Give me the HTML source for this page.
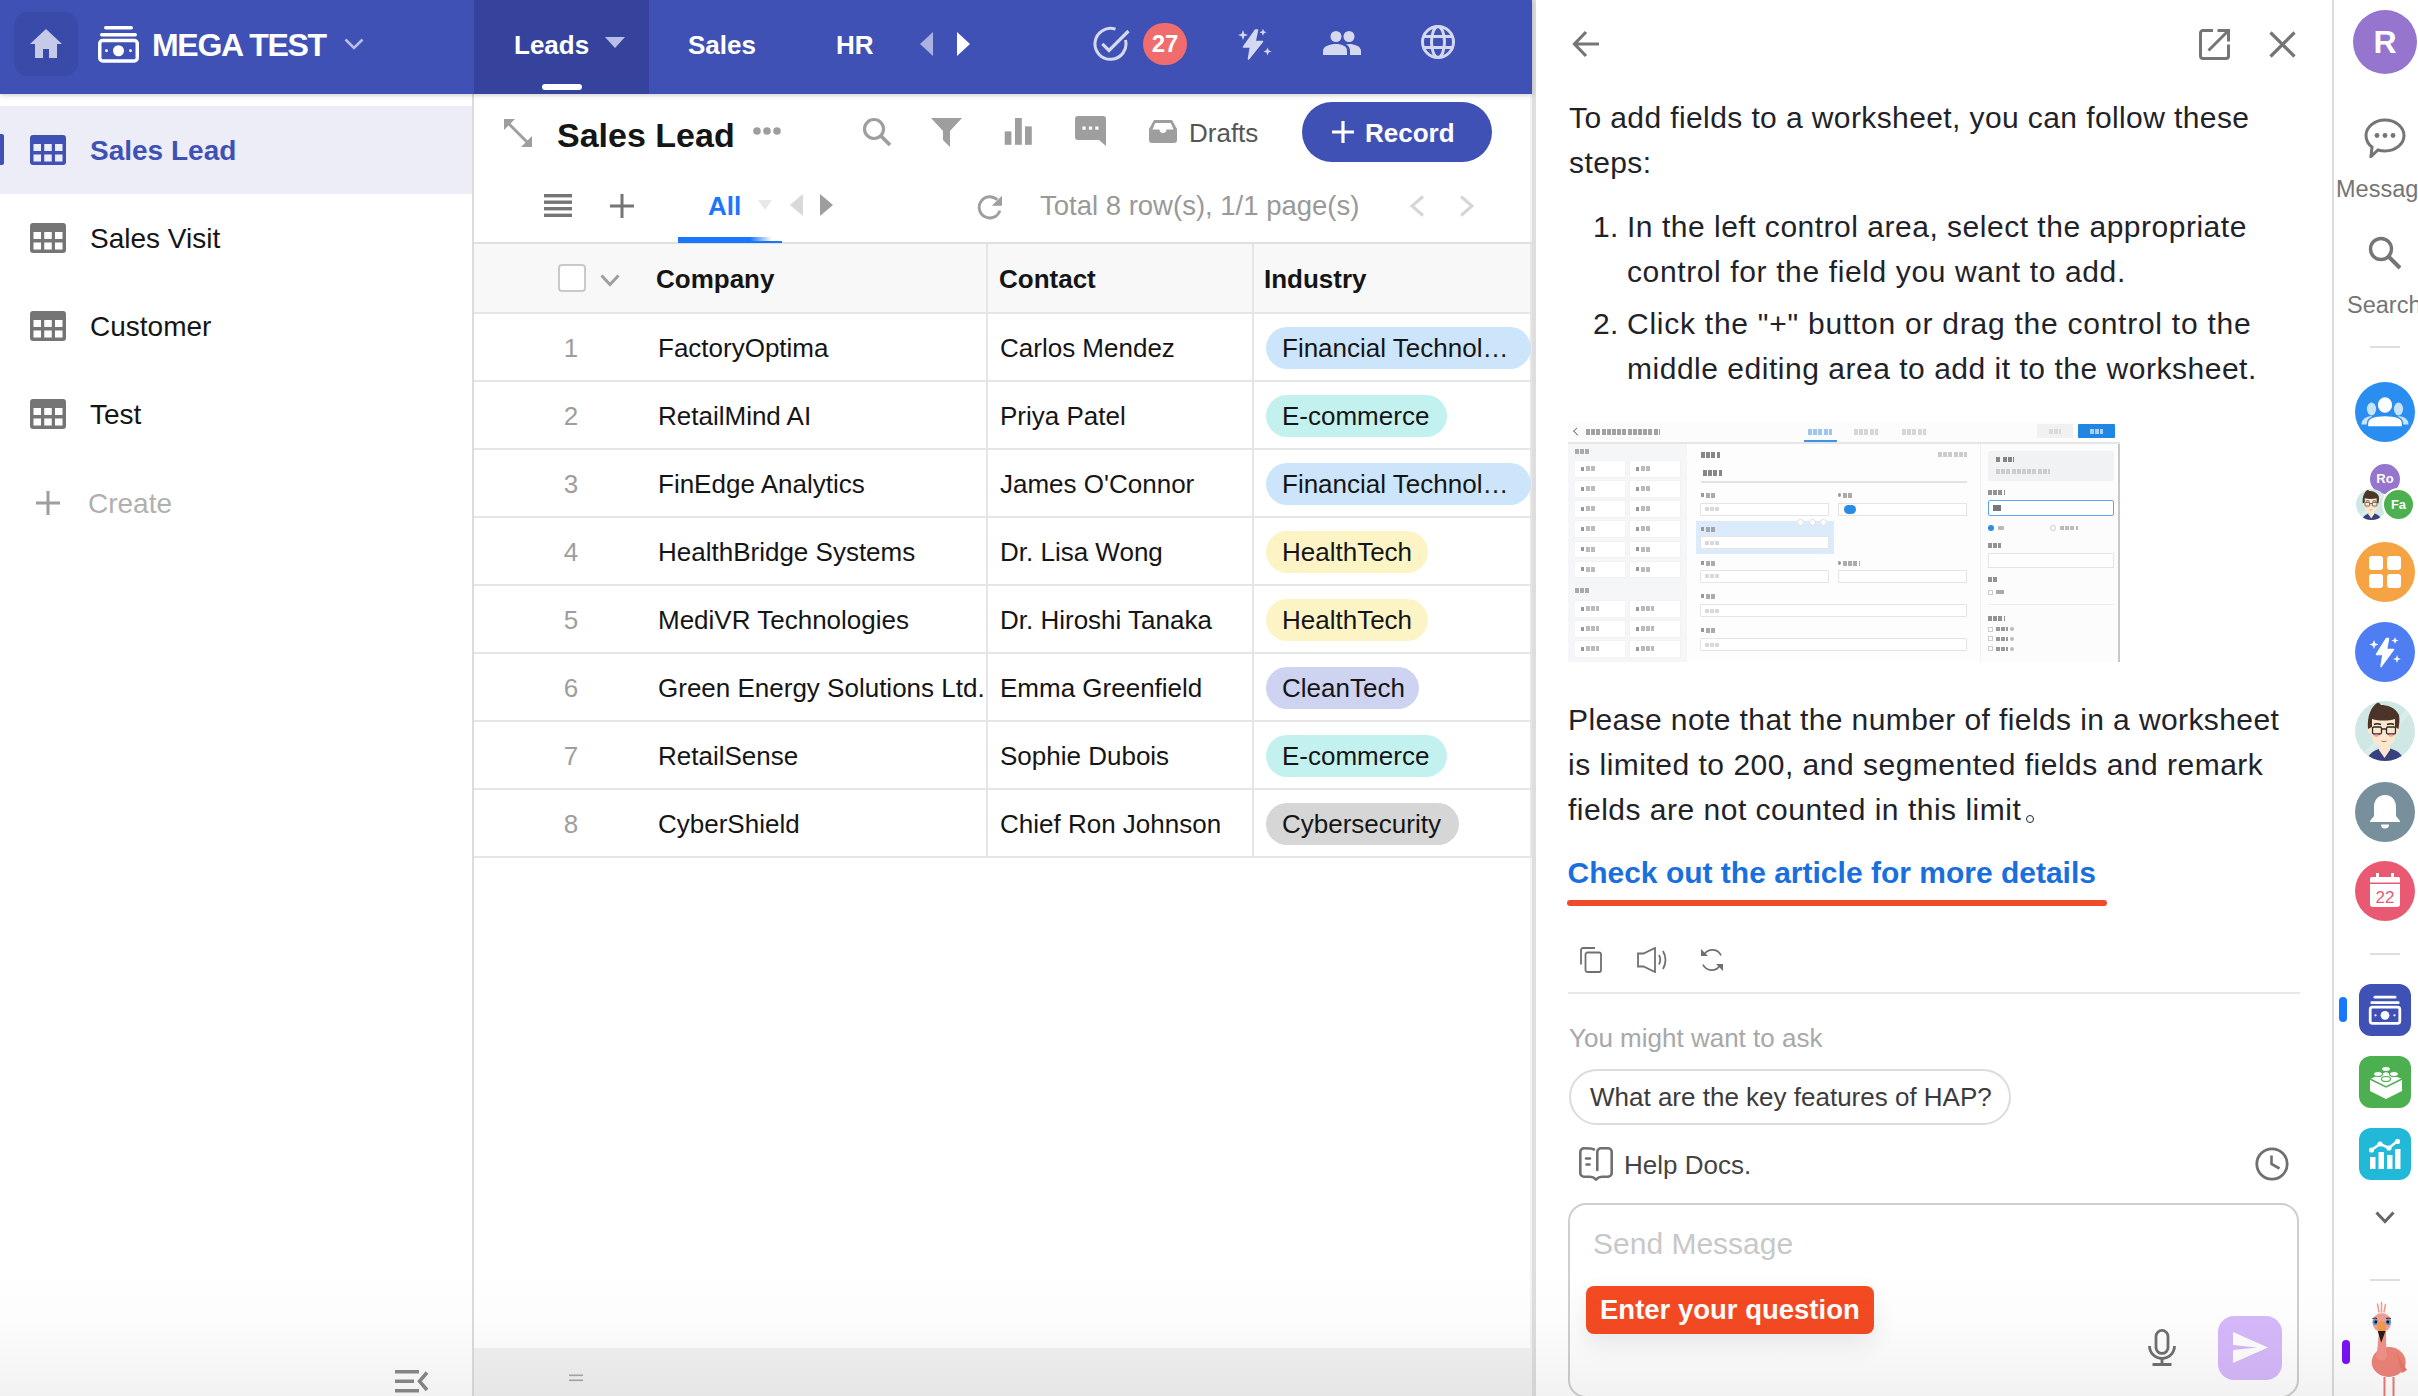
<!DOCTYPE html>
<html><head><meta charset="utf-8">
<style>
*{box-sizing:border-box;margin:0;padding:0}
html,body{width:2418px;height:1396px;overflow:hidden;background:#fff;font-family:"Liberation Sans",sans-serif;color:#151515}
.abs{position:absolute}
svg{display:block}
#nav{position:absolute;left:0;top:0;width:1532px;height:94px;background:#3f51b5;box-shadow:0 1px 5px rgba(0,0,0,0.22);z-index:5}
#home{position:absolute;left:14px;top:12px;width:64px;height:64px;border-radius:14px;background:#3a4aa8}
.navtxt{position:absolute;color:#fff;font-weight:700;white-space:nowrap}
#side{position:absolute;left:0;top:94px;width:474px;height:1302px;border-right:2px solid #dcdcdc;background:#fff}
.sitem{position:absolute;left:0;width:472px;height:88px}
.sitem .lbl{position:absolute;left:90px;top:1px;line-height:88px;font-size:28px;color:#151515;white-space:nowrap}
#main{position:absolute;left:474px;top:94px;width:1058px;height:1302px;background:#fff}
#chatb{position:absolute;left:1532px;top:0;width:4px;height:1396px;background:#dedede}
#chat{position:absolute;left:1536px;top:0;width:796px;height:1396px;background:#fff}
#rsb{position:absolute;left:2332px;top:0;width:86px;height:1396px;border-left:2px solid #dcdcdc;background:#fff;overflow:hidden}
.hd{top:170px;font-size:26px;line-height:30px;font-weight:700;color:#151515;white-space:nowrap}
.row{position:absolute;left:0;width:1058px;height:68px;border-top:2px solid #e6e6e6}
.row .num{position:absolute;left:67px;width:60px;text-align:center;top:1px;line-height:66px;font-size:26px;color:#9e9e9e}
.row .c1{position:absolute;left:184px;top:1px;line-height:66px;font-size:26px;color:#151515;white-space:nowrap}
.row .c2{position:absolute;left:526px;top:1px;line-height:66px;font-size:26px;color:#151515;white-space:nowrap}
.row .pill{position:absolute;left:792px;top:13px;height:42px;border-radius:21px;padding-left:16px;line-height:43px;font-size:26px;color:#151515;white-space:nowrap;overflow:hidden}
.ct{font-size:30px;line-height:45px;letter-spacing:0.4px;color:#1f2329;white-space:nowrap}
#shade{position:absolute;left:0;top:1270px;width:2418px;height:126px;background:linear-gradient(to bottom,rgba(0,0,0,0) 0%,rgba(0,0,0,0.012) 40%,rgba(0,0,0,0.05) 100%);z-index:50;pointer-events:none}
</style></head><body>

<!-- NAV -->
<div id="nav">
  <div id="home"><svg class="abs" style="left:16px;top:17px" width="32" height="30" viewBox="0 0 32 30"><path d="M16 0 L32 15 L27 15 L27 29 L19 29 L19 20 L13 20 L13 29 L5 29 L5 15 L0 15 Z" fill="#c5cae9"/></svg></div>
  <svg class="abs" style="left:98px;top:25px" width="41" height="38" viewBox="0 0 41 38"><rect x="6" y="1" width="29" height="3.5" rx="1.75" fill="#fff"/><rect x="2" y="8" width="37" height="3.5" rx="1.75" fill="#fff"/><rect x="1.75" y="15.5" width="37.5" height="20.5" rx="3" fill="none" stroke="#fff" stroke-width="3.5"/><circle cx="20.5" cy="25.75" r="5.5" fill="#fff"/><circle cx="8.5" cy="25.75" r="1.4" fill="#fff"/><circle cx="32.5" cy="25.75" r="1.4" fill="#fff"/></svg>
  <div class="navtxt" style="left:152px;top:27px;font-size:32px;letter-spacing:-1.3px;line-height:36px">MEGA TEST</div>
  <svg class="abs" style="left:344px;top:38px" width="20" height="12" viewBox="0 0 20 12"><path d="M1.5 1.5 L10 10 L18.5 1.5" fill="none" stroke="#b8bfe6" stroke-width="2.6"/></svg>
  <div class="abs" style="left:474px;top:0;width:175px;height:94px;background:#36439c"></div>
  <div class="navtxt" style="left:514px;top:30px;font-size:26px;line-height:30px">Leads</div>
  <svg class="abs" style="left:605px;top:37px" width="20" height="11" viewBox="0 0 20 11"><path d="M0 0 L20 0 L10 11 Z" fill="#b8bfe6"/></svg>
  <div class="abs" style="left:542px;top:84px;width:40px;height:6px;border-radius:3px;background:#fff"></div>
  <div class="navtxt" style="left:688px;top:30px;font-size:26px;line-height:30px">Sales</div>
  <div class="navtxt" style="left:836px;top:30px;font-size:26px;line-height:30px">HR</div>
  <svg class="abs" style="left:920px;top:32px" width="14" height="24" viewBox="0 0 14 24"><path d="M13 0 L13 24 L0 12 Z" fill="#aab2e0"/></svg>
  <svg class="abs" style="left:956px;top:32px" width="14" height="24" viewBox="0 0 14 24"><path d="M1 0 L1 24 L14 12 Z" fill="#fff"/></svg>
  <!-- check circle -->
  <svg class="abs" style="left:1093px;top:26px" width="38" height="36" viewBox="0 0 38 36"><path d="M32.5 14 A15.5 15.5 0 1 1 22.5 3.2" fill="none" stroke="#d5d9f0" stroke-width="3"/><path d="M9.3 17.9 L16 24.5 L35.5 5" fill="none" stroke="#d5d9f0" stroke-width="3.2"/></svg>
  <div class="abs" style="left:1143px;top:23px;width:44px;height:42px;border-radius:22px;background:#f16c6c;color:#fff;font-weight:700;font-size:24px;line-height:42px;text-align:center">27</div>
  <!-- sparkle bolt -->
  <svg class="abs" style="left:1236px;top:28px" width="36" height="33" viewBox="0 0 36 33"><path d="M19.5 2 L7.5 19 L14.5 19 L12.5 31 L26.5 13.5 L19 13.5 L21.5 2 Z" fill="#d5d9f0" stroke="#d5d9f0" stroke-width="1.6" stroke-linejoin="round"/><path d="M7 2 L8.3 5.7 L12 7 L8.3 8.3 L7 12 L5.7 8.3 L2 7 L5.7 5.7 Z" fill="#d5d9f0"/><path d="M27 0.8 L28 3.3 L30.5 4.3 L28 5.3 L27 7.8 L26 5.3 L23.5 4.3 L26 3.3 Z" fill="#d5d9f0"/><path d="M31.5 19.4 L32.6 22.3 L35.5 23.4 L32.6 24.5 L31.5 27.4 L30.4 24.5 L27.5 23.4 L30.4 22.3 Z" fill="#d5d9f0"/></svg>
  <!-- people -->
  <svg class="abs" style="left:1323px;top:31px" width="38" height="25" viewBox="0 0 38 25"><circle cx="13" cy="5.5" r="5.5" fill="#d5d9f0"/><circle cx="26" cy="5.5" r="5.5" fill="#d5d9f0"/><path d="M0 24 L0 20 C0 15 7 13 13 13 C19 13 24 15 24 20 L24 24 Z" fill="#d5d9f0"/><path d="M26 13 C31 13 38 15 38 20 L38 24 L27 24 L27 20 C27 17 25.5 14.5 23 13.5 C24 13.2 25 13 26 13 Z" fill="#d5d9f0"/></svg>
  <!-- globe -->
  <svg class="abs" style="left:1420px;top:24px" width="36" height="36" viewBox="0 0 36 36"><circle cx="18" cy="18" r="15.5" fill="none" stroke="#d5d9f0" stroke-width="3"/><ellipse cx="18" cy="18" rx="6.5" ry="15.5" fill="none" stroke="#d5d9f0" stroke-width="3"/><path d="M4 12.5 H32 M4 23.5 H32" stroke="#d5d9f0" stroke-width="3"/></svg>
</div>

<!-- LEFT SIDEBAR -->
<div id="side">
  <div class="sitem" style="top:12px;background:#ededf8">
    <div class="abs" style="left:0;top:28px;width:4px;height:31px;border-radius:0 2px 2px 0;background:#3f51b5"></div>
    <svg class="abs" style="left:30px;top:29px" width="36" height="30" viewBox="0 0 36 30"><rect x="0" y="0" width="36" height="30" rx="3" fill="#3f51b5"/><g fill="#ededf8"><rect x="3.5" y="9" width="7.5" height="7"/><rect x="14.25" y="9" width="7.5" height="7"/><rect x="25" y="9" width="7.5" height="7"/><rect x="3.5" y="19.5" width="7.5" height="7"/><rect x="14.25" y="19.5" width="7.5" height="7"/><rect x="25" y="19.5" width="7.5" height="7"/></g></svg>
    <div class="lbl" style="color:#3f51b5;font-weight:700">Sales Lead</div>
  </div>
  <div class="sitem" style="top:100px">
    <svg class="abs" style="left:30px;top:29px" width="36" height="30" viewBox="0 0 36 30"><rect x="0" y="0" width="36" height="30" rx="3" fill="#757575"/><g fill="#fff"><rect x="3.5" y="9" width="7.5" height="7"/><rect x="14.25" y="9" width="7.5" height="7"/><rect x="25" y="9" width="7.5" height="7"/><rect x="3.5" y="19.5" width="7.5" height="7"/><rect x="14.25" y="19.5" width="7.5" height="7"/><rect x="25" y="19.5" width="7.5" height="7"/></g></svg>
    <div class="lbl">Sales Visit</div>
  </div>
  <div class="sitem" style="top:188px">
    <svg class="abs" style="left:30px;top:29px" width="36" height="30" viewBox="0 0 36 30"><rect x="0" y="0" width="36" height="30" rx="3" fill="#757575"/><g fill="#fff"><rect x="3.5" y="9" width="7.5" height="7"/><rect x="14.25" y="9" width="7.5" height="7"/><rect x="25" y="9" width="7.5" height="7"/><rect x="3.5" y="19.5" width="7.5" height="7"/><rect x="14.25" y="19.5" width="7.5" height="7"/><rect x="25" y="19.5" width="7.5" height="7"/></g></svg>
    <div class="lbl">Customer</div>
  </div>
  <div class="sitem" style="top:276px">
    <svg class="abs" style="left:30px;top:29px" width="36" height="30" viewBox="0 0 36 30"><rect x="0" y="0" width="36" height="30" rx="3" fill="#757575"/><g fill="#fff"><rect x="3.5" y="9" width="7.5" height="7"/><rect x="14.25" y="9" width="7.5" height="7"/><rect x="25" y="9" width="7.5" height="7"/><rect x="3.5" y="19.5" width="7.5" height="7"/><rect x="14.25" y="19.5" width="7.5" height="7"/><rect x="25" y="19.5" width="7.5" height="7"/></g></svg>
    <div class="lbl">Test</div>
  </div>
  <div class="sitem" style="top:365px">
    <svg class="abs" style="left:36px;top:32px" width="24" height="24" viewBox="0 0 24 24"><path d="M12 0 V24 M0 12 H24" stroke="#9e9e9e" stroke-width="3"/></svg>
    <div class="lbl" style="left:88px;color:#b0b0b0">Create</div>
  </div>
  <svg class="abs" style="left:395px;top:1276px" width="34" height="23" viewBox="0 0 34 23"><g fill="#8a8a8a"><rect x="0" y="0" width="24" height="3.5"/><rect x="0" y="9.5" width="19" height="3.5"/><rect x="0" y="19" width="24" height="3.5"/></g><path d="M32 2.5 L24.5 11.25 L32 20" fill="none" stroke="#8a8a8a" stroke-width="3.5"/></svg>
</div>

<!-- MAIN -->
<div id="main">
  <div class="abs" style="left:1056px;top:0;width:2px;height:1302px;background:#f2f2f2"></div>
  <!-- toolbar row 1 -->
  <svg class="abs" style="left:30px;top:25px" width="28" height="28" viewBox="0 0 28 28"><path d="M5 5 L23 23" stroke="#9e9e9e" stroke-width="3"/><path d="M0 0 L11 0 L0 11 Z" fill="#9e9e9e"/><path d="M28 28 L17 28 L28 17 Z" fill="#9e9e9e"/></svg>
  <div class="abs" style="left:83px;top:21px;font-size:34px;line-height:40px;font-weight:700;color:#151515;white-space:nowrap">Sales Lead</div>
  <svg class="abs" style="left:279px;top:33px" width="28" height="8" viewBox="0 0 28 8"><circle cx="4" cy="4" r="3.8" fill="#9e9e9e"/><circle cx="14" cy="4" r="3.8" fill="#9e9e9e"/><circle cx="24" cy="4" r="3.8" fill="#9e9e9e"/></svg>
  <svg class="abs" style="left:388px;top:23px" width="30" height="30" viewBox="0 0 30 30"><circle cx="12" cy="12" r="9.5" fill="none" stroke="#9e9e9e" stroke-width="3.2"/><path d="M19 19 L28 28" stroke="#9e9e9e" stroke-width="3.8"/></svg>
  <svg class="abs" style="left:457px;top:24px" width="31" height="29" viewBox="0 0 31 29"><path d="M0 0 H31 L19 13 V29 L12 22 V13 Z" fill="#9e9e9e"/></svg>
  <svg class="abs" style="left:530px;top:24px" width="28" height="28" viewBox="0 0 28 28"><rect x="0.7" y="13.4" width="6.7" height="13.4" fill="#9e9e9e"/><rect x="11" y="0" width="6.8" height="26.8" fill="#9e9e9e"/><rect x="21" y="8.4" width="6.8" height="18.4" fill="#9e9e9e"/></svg>
  <svg class="abs" style="left:601px;top:22px" width="31" height="30" viewBox="0 0 31 30"><path d="M3 0 H28 A3 3 0 0 1 31 3 V30 L24 24 H3 A3 3 0 0 1 0 21 V3 A3 3 0 0 1 3 0 Z" fill="#9e9e9e"/><rect x="7.5" y="10.5" width="3.2" height="3.2" fill="#fff"/><rect x="13.9" y="10.5" width="3.2" height="3.2" fill="#fff"/><rect x="20.3" y="10.5" width="3.2" height="3.2" fill="#fff"/></svg>
  <svg class="abs" style="left:675px;top:26px" width="28" height="23" viewBox="0 0 28 23"><path d="M5 0 H23 L28 9 V20 A3 3 0 0 1 25 23 H3 A3 3 0 0 1 0 20 V9 Z" fill="#9e9e9e"/><path d="M3.5 9.5 L6.2 3 H21.8 L24.5 9.5 H17.5 A3.5 3.5 0 0 1 10.5 9.5 Z" fill="#fff"/></svg>
  <div class="abs" style="left:715px;top:24px;font-size:26px;line-height:30px;color:#555;white-space:nowrap">Drafts</div>
  <div class="abs" style="left:828px;top:8px;width:190px;height:60px;border-radius:30px;background:#3f51b5"></div>
  <svg class="abs" style="left:858px;top:27px" width="22" height="22" viewBox="0 0 22 22"><path d="M11 0 V22 M0 11 H22" stroke="#fff" stroke-width="3.2"/></svg>
  <div class="abs" style="left:891px;top:24px;font-size:26px;line-height:30px;font-weight:700;color:#fff;white-space:nowrap">Record</div>
  <!-- toolbar row 2 -->
  <svg class="abs" style="left:70px;top:100px" width="28" height="23" viewBox="0 0 28 23"><g fill="#757575"><rect x="0" y="0" width="28" height="3.4"/><rect x="0" y="6.5" width="28" height="3.4"/><rect x="0" y="13" width="28" height="3.4"/><rect x="0" y="19.6" width="28" height="3.4"/></g></svg>
  <svg class="abs" style="left:136px;top:100px" width="24" height="24" viewBox="0 0 24 24"><path d="M12 0 V24 M0 12 H24" stroke="#757575" stroke-width="3"/></svg>
  <div class="abs" style="left:234px;top:97px;font-size:26px;line-height:30px;font-weight:700;color:#1a75ff;white-space:nowrap">All</div>
  <svg class="abs" style="left:284px;top:106px" width="14" height="10" viewBox="0 0 14 10"><path d="M0 0 H14 L7 10 Z" fill="#e8e8e8"/></svg>
  <svg class="abs" style="left:316px;top:100px" width="14" height="22" viewBox="0 0 14 22"><path d="M13 0 V22 L0 11 Z" fill="#d9d9d9"/></svg>
  <svg class="abs" style="left:345px;top:100px" width="14" height="22" viewBox="0 0 14 22"><path d="M1 0 V22 L14 11 Z" fill="#9e9e9e"/></svg>
  <div class="abs" style="left:0;top:148px;width:1058px;height:2px;background:#e0e0e0"></div>
  <div class="abs" style="left:204px;top:143px;width:104px;height:6px;background:linear-gradient(to right,#1a75ff 0,#1a75ff 72px,rgba(26,117,255,0) 94px)"></div>
  <div class="abs" style="left:204px;top:147px;width:104px;height:2px;background:#1a75ff"></div>
  <svg class="abs" style="left:502px;top:98px" width="28" height="28" viewBox="0 0 28 28"><path d="M23.9 18.6 A10.6 10.6 0 1 1 21.3 7.8" fill="none" stroke="#9e9e9e" stroke-width="2.9"/><path d="M26 3.7 L26 13.8 L15.8 13.8 Z" fill="#9e9e9e"/></svg>
  <div class="abs" style="left:566px;top:97px;font-size:27.5px;line-height:30px;color:#999;white-space:nowrap">Total 8 row(s), 1/1 page(s)</div>
  <svg class="abs" style="left:935px;top:101px" width="16" height="22" viewBox="0 0 16 22"><path d="M14 1.5 L3 11 L14 20.5" fill="none" stroke="#d6d6d6" stroke-width="3"/></svg>
  <svg class="abs" style="left:985px;top:101px" width="16" height="22" viewBox="0 0 16 22"><path d="M2 1.5 L13 11 L2 20.5" fill="none" stroke="#d6d6d6" stroke-width="3"/></svg>
  <!-- table header -->
  <div class="abs" style="left:0;top:150px;width:1058px;height:69px;background:#f8f8f8"></div>
  <div class="abs" style="left:84px;top:170px;width:28px;height:28px;border:2px solid #c9c9c9;border-radius:4px;background:#fff"></div>
  <svg class="abs" style="left:126px;top:180px" width="20" height="13" viewBox="0 0 20 13"><path d="M1.5 1.5 L10 10.5 L18.5 1.5" fill="none" stroke="#9e9e9e" stroke-width="3"/></svg>
  <div class="abs hd" style="left:182px">Company</div>
  <div class="abs hd" style="left:525px">Contact</div>
  <div class="abs hd" style="left:790px">Industry</div>
  <div class="abs" style="left:512px;top:150px;width:2px;height:613px;background:#e6e6e6"></div>
  <div class="abs" style="left:778px;top:150px;width:2px;height:613px;background:#e6e6e6"></div>
  <div class="abs" style="left:1056px;top:150px;width:2px;height:613px;background:#e6e6e6"></div>
  <div class="row" style="top:218px"><div class="num">1</div><div class="c1">FactoryOptima</div><div class="c2">Carlos Mendez</div><div class="pill" style="background:#cce5fa;width:265px">Financial Technol…</div></div>
  <div class="row" style="top:286px"><div class="num">2</div><div class="c1">RetailMind AI</div><div class="c2">Priya Patel</div><div class="pill" style="background:#c3f1ef;width:181px">E-commerce</div></div>
  <div class="row" style="top:354px"><div class="num">3</div><div class="c1">FinEdge Analytics</div><div class="c2">James O'Connor</div><div class="pill" style="background:#cce5fa;width:265px">Financial Technol…</div></div>
  <div class="row" style="top:422px"><div class="num">4</div><div class="c1">HealthBridge Systems</div><div class="c2">Dr. Lisa Wong</div><div class="pill" style="background:#fdf4c6;width:162px">HealthTech</div></div>
  <div class="row" style="top:490px"><div class="num">5</div><div class="c1">MediVR Technologies</div><div class="c2">Dr. Hiroshi Tanaka</div><div class="pill" style="background:#fdf4c6;width:162px">HealthTech</div></div>
  <div class="row" style="top:558px"><div class="num">6</div><div class="c1">Green Energy Solutions Ltd.</div><div class="c2">Emma Greenfield</div><div class="pill" style="background:#cfd3f2;width:153px">CleanTech</div></div>
  <div class="row" style="top:626px"><div class="num">7</div><div class="c1">RetailSense</div><div class="c2">Sophie Dubois</div><div class="pill" style="background:#c3f1ef;width:181px">E-commerce</div></div>
  <div class="row" style="top:694px"><div class="num">8</div><div class="c1">CyberShield</div><div class="c2">Chief Ron Johnson</div><div class="pill" style="background:#d6d6d6;width:193px">Cybersecurity</div></div>
  <div class="abs" style="left:0;top:762px;width:1058px;height:2px;background:#e6e6e6"></div>
  <!-- footer -->
  <div class="abs" style="left:0;top:1254px;width:1058px;height:48px;background:#f2f2f2"></div>
  <svg class="abs" style="left:95px;top:1280px" width="14" height="8" viewBox="0 0 14 8"><rect x="0" y="0.5" width="14" height="1.6" fill="#a8a8a8"/><rect x="0" y="5.5" width="14" height="1.6" fill="#a8a8a8"/></svg>
</div>

<div id="chatb"></div>
<!-- CHAT -->
<div id="chat">
  <svg class="abs" style="left:36px;top:30px" width="28" height="28" viewBox="0 0 28 28"><path d="M27 14 H3 M14 2 L2.5 14 L14 26" fill="none" stroke="#757575" stroke-width="3.2"/></svg>
  <svg class="abs" style="left:663px;top:29px" width="31" height="31" viewBox="0 0 31 31"><path d="M14 1.5 H4 A2.5 2.5 0 0 0 1.5 4 V27 A2.5 2.5 0 0 0 4 29.5 H27 A2.5 2.5 0 0 0 29.5 27 V15.5" fill="none" stroke="#757575" stroke-width="3"/><path d="M18.5 1.5 H29.5 V12.5 M29.5 1.5 L9.5 21.5" fill="none" stroke="#757575" stroke-width="3"/></svg>
  <svg class="abs" style="left:733px;top:31px" width="27" height="27" viewBox="0 0 27 27"><path d="M1.5 1.5 L25.5 25.5 M25.5 1.5 L1.5 25.5" stroke="#757575" stroke-width="3.2"/></svg>
  <div class="abs ct" style="left:33px;top:95px">To add fields to a worksheet, you can follow these<br>steps:</div>
  <div class="abs ct" style="left:57px;top:203.5px">1.</div>
  <div class="abs ct" style="left:91px;top:203.5px"><span style="letter-spacing:0.51px">In the left control area, select the appropriate</span><br><span style="letter-spacing:0.62px">control for the field you want to add.</span></div>
  <div class="abs ct" style="left:57px;top:301px">2.</div>
  <div class="abs ct" style="left:91px;top:301px"><span style="letter-spacing:0.75px">Click the "+" button or drag the control to the</span><br><span style="letter-spacing:0.52px">middle editing area to add it to the worksheet.</span></div>
<div class="abs" style="left:32px;top:422px;width:552px;height:240px;overflow:hidden;background:#fff"><div class="abs" style="left:0.0px;top:0.0px;width:552.0px;height:20.0px;background:#fcfcfc"></div><div class="abs" style="left:0.0px;top:20.0px;width:552.0px;height:1.5px;background:#e6e6e6"></div><div class="abs" style="left:6.0px;top:7.0px;width:6.0px;height:5.0px;border-left:1.2px solid #777;border-bottom:1.2px solid #777;transform:rotate(45deg)"></div><div class="abs" style="left:18.0px;top:6.5px;width:74px;height:6px;background:repeating-linear-gradient(90deg,#666 0,#666 4px,rgba(255,255,255,0) 4px,rgba(255,255,255,0) 5.2px);opacity:.6"></div><div class="abs" style="left:240.0px;top:6.5px;width:24px;height:6px;background:repeating-linear-gradient(90deg,#9cc7f2 0,#9cc7f2 4px,rgba(255,255,255,0) 4px,rgba(255,255,255,0) 5.2px)"></div><div class="abs" style="left:286.0px;top:6.5px;width:24px;height:6px;background:repeating-linear-gradient(90deg,#d6d6d6 0,#d6d6d6 4px,rgba(255,255,255,0) 4px,rgba(255,255,255,0) 5.2px)"></div><div class="abs" style="left:334.0px;top:6.5px;width:24px;height:6px;background:repeating-linear-gradient(90deg,#d6d6d6 0,#d6d6d6 4px,rgba(255,255,255,0) 4px,rgba(255,255,255,0) 5.2px)"></div><div class="abs" style="left:236.0px;top:18.0px;width:33.0px;height:2.0px;background:#3b93e8"></div><div class="abs" style="left:469.0px;top:2.0px;width:36.0px;height:14.0px;background:#f1f1f1"></div><div class="abs" style="left:481.0px;top:7.0px;width:12px;height:4.5px;background:repeating-linear-gradient(90deg,#d9d9d9 0,#d9d9d9 4px,rgba(255,255,255,0) 4px,rgba(255,255,255,0) 5.2px)"></div><div class="abs" style="left:510.0px;top:2.0px;width:37.0px;height:14.0px;background:#1f87e3;border-radius:1px"></div><div class="abs" style="left:522.0px;top:7.0px;width:13px;height:4.5px;background:repeating-linear-gradient(90deg,#a9d0f6 0,#a9d0f6 4px,rgba(255,255,255,0) 4px,rgba(255,255,255,0) 5.2px)"></div><div class="abs" style="left:0.0px;top:21.5px;width:119.0px;height:218.5px;background:#f5f6f8"></div><div class="abs" style="left:7.0px;top:27.0px;width:15px;height:5px;background:repeating-linear-gradient(90deg,#777 0,#777 4px,rgba(255,255,255,0) 4px,rgba(255,255,255,0) 5.2px);opacity:.6"></div><div class="abs" style="left:6.5px;top:39.0px;width:50.5px;height:15.5px;background:#fff;box-shadow:0 0 0 .5px #eceef2"></div><div class="abs" style="left:12.5px;top:44.5px;width:3.0px;height:4.0px;background:#999"></div><div class="abs" style="left:17.5px;top:44.0px;width:10px;height:5px;background:repeating-linear-gradient(90deg,#aaa 0,#aaa 4px,rgba(255,255,255,0) 4px,rgba(255,255,255,0) 5.2px);opacity:.8"></div><div class="abs" style="left:61.5px;top:39.0px;width:50.5px;height:15.5px;background:#fff;box-shadow:0 0 0 .5px #eceef2"></div><div class="abs" style="left:67.5px;top:44.5px;width:3.0px;height:4.0px;background:#999"></div><div class="abs" style="left:72.5px;top:44.0px;width:10px;height:5px;background:repeating-linear-gradient(90deg,#aaa 0,#aaa 4px,rgba(255,255,255,0) 4px,rgba(255,255,255,0) 5.2px);opacity:.8"></div><div class="abs" style="left:6.5px;top:59.0px;width:50.5px;height:15.5px;background:#fff;box-shadow:0 0 0 .5px #eceef2"></div><div class="abs" style="left:12.5px;top:64.5px;width:3.0px;height:4.0px;background:#999"></div><div class="abs" style="left:17.5px;top:64.0px;width:10px;height:5px;background:repeating-linear-gradient(90deg,#aaa 0,#aaa 4px,rgba(255,255,255,0) 4px,rgba(255,255,255,0) 5.2px);opacity:.8"></div><div class="abs" style="left:61.5px;top:59.0px;width:50.5px;height:15.5px;background:#fff;box-shadow:0 0 0 .5px #eceef2"></div><div class="abs" style="left:67.5px;top:64.5px;width:3.0px;height:4.0px;background:#999"></div><div class="abs" style="left:72.5px;top:64.0px;width:10px;height:5px;background:repeating-linear-gradient(90deg,#aaa 0,#aaa 4px,rgba(255,255,255,0) 4px,rgba(255,255,255,0) 5.2px);opacity:.8"></div><div class="abs" style="left:6.5px;top:79.0px;width:50.5px;height:15.5px;background:#fff;box-shadow:0 0 0 .5px #eceef2"></div><div class="abs" style="left:12.5px;top:84.5px;width:3.0px;height:4.0px;background:#999"></div><div class="abs" style="left:17.5px;top:84.0px;width:10px;height:5px;background:repeating-linear-gradient(90deg,#aaa 0,#aaa 4px,rgba(255,255,255,0) 4px,rgba(255,255,255,0) 5.2px);opacity:.8"></div><div class="abs" style="left:61.5px;top:79.0px;width:50.5px;height:15.5px;background:#fff;box-shadow:0 0 0 .5px #eceef2"></div><div class="abs" style="left:67.5px;top:84.5px;width:3.0px;height:4.0px;background:#999"></div><div class="abs" style="left:72.5px;top:84.0px;width:10px;height:5px;background:repeating-linear-gradient(90deg,#aaa 0,#aaa 4px,rgba(255,255,255,0) 4px,rgba(255,255,255,0) 5.2px);opacity:.8"></div><div class="abs" style="left:6.5px;top:99.0px;width:50.5px;height:15.5px;background:#fff;box-shadow:0 0 0 .5px #eceef2"></div><div class="abs" style="left:12.5px;top:104.5px;width:3.0px;height:4.0px;background:#999"></div><div class="abs" style="left:17.5px;top:104.0px;width:10px;height:5px;background:repeating-linear-gradient(90deg,#aaa 0,#aaa 4px,rgba(255,255,255,0) 4px,rgba(255,255,255,0) 5.2px);opacity:.8"></div><div class="abs" style="left:61.5px;top:99.0px;width:50.5px;height:15.5px;background:#fff;box-shadow:0 0 0 .5px #eceef2"></div><div class="abs" style="left:67.5px;top:104.5px;width:3.0px;height:4.0px;background:#999"></div><div class="abs" style="left:72.5px;top:104.0px;width:10px;height:5px;background:repeating-linear-gradient(90deg,#aaa 0,#aaa 4px,rgba(255,255,255,0) 4px,rgba(255,255,255,0) 5.2px);opacity:.8"></div><div class="abs" style="left:6.5px;top:119.5px;width:50.5px;height:15.5px;background:#fff;box-shadow:0 0 0 .5px #eceef2"></div><div class="abs" style="left:12.5px;top:125.0px;width:3.0px;height:4.0px;background:#999"></div><div class="abs" style="left:17.5px;top:124.5px;width:10px;height:5px;background:repeating-linear-gradient(90deg,#aaa 0,#aaa 4px,rgba(255,255,255,0) 4px,rgba(255,255,255,0) 5.2px);opacity:.8"></div><div class="abs" style="left:61.5px;top:119.5px;width:50.5px;height:15.5px;background:#fff;box-shadow:0 0 0 .5px #eceef2"></div><div class="abs" style="left:67.5px;top:125.0px;width:3.0px;height:4.0px;background:#999"></div><div class="abs" style="left:72.5px;top:124.5px;width:10px;height:5px;background:repeating-linear-gradient(90deg,#aaa 0,#aaa 4px,rgba(255,255,255,0) 4px,rgba(255,255,255,0) 5.2px);opacity:.8"></div><div class="abs" style="left:6.5px;top:139.5px;width:50.5px;height:15.5px;background:#fff;box-shadow:0 0 0 .5px #eceef2"></div><div class="abs" style="left:12.5px;top:145.0px;width:3.0px;height:4.0px;background:#999"></div><div class="abs" style="left:17.5px;top:144.5px;width:10px;height:5px;background:repeating-linear-gradient(90deg,#aaa 0,#aaa 4px,rgba(255,255,255,0) 4px,rgba(255,255,255,0) 5.2px);opacity:.8"></div><div class="abs" style="left:61.5px;top:139.5px;width:50.5px;height:15.5px;background:#fff;box-shadow:0 0 0 .5px #eceef2"></div><div class="abs" style="left:67.5px;top:145.0px;width:3.0px;height:4.0px;background:#999"></div><div class="abs" style="left:72.5px;top:144.5px;width:10px;height:5px;background:repeating-linear-gradient(90deg,#aaa 0,#aaa 4px,rgba(255,255,255,0) 4px,rgba(255,255,255,0) 5.2px);opacity:.8"></div><div class="abs" style="left:7.0px;top:166.0px;width:15px;height:5px;background:repeating-linear-gradient(90deg,#777 0,#777 4px,rgba(255,255,255,0) 4px,rgba(255,255,255,0) 5.2px);opacity:.6"></div><div class="abs" style="left:6.5px;top:179.0px;width:50.5px;height:15.5px;background:#fff;box-shadow:0 0 0 .5px #eceef2"></div><div class="abs" style="left:12.5px;top:184.5px;width:3.0px;height:4.0px;background:#999"></div><div class="abs" style="left:17.5px;top:184.0px;width:13px;height:5px;background:repeating-linear-gradient(90deg,#aaa 0,#aaa 4px,rgba(255,255,255,0) 4px,rgba(255,255,255,0) 5.2px);opacity:.8"></div><div class="abs" style="left:61.5px;top:179.0px;width:50.5px;height:15.5px;background:#fff;box-shadow:0 0 0 .5px #eceef2"></div><div class="abs" style="left:67.5px;top:184.5px;width:3.0px;height:4.0px;background:#999"></div><div class="abs" style="left:72.5px;top:184.0px;width:13px;height:5px;background:repeating-linear-gradient(90deg,#aaa 0,#aaa 4px,rgba(255,255,255,0) 4px,rgba(255,255,255,0) 5.2px);opacity:.8"></div><div class="abs" style="left:6.5px;top:199.0px;width:50.5px;height:15.5px;background:#fff;box-shadow:0 0 0 .5px #eceef2"></div><div class="abs" style="left:12.5px;top:204.5px;width:3.0px;height:4.0px;background:#999"></div><div class="abs" style="left:17.5px;top:204.0px;width:13px;height:5px;background:repeating-linear-gradient(90deg,#aaa 0,#aaa 4px,rgba(255,255,255,0) 4px,rgba(255,255,255,0) 5.2px);opacity:.8"></div><div class="abs" style="left:61.5px;top:199.0px;width:50.5px;height:15.5px;background:#fff;box-shadow:0 0 0 .5px #eceef2"></div><div class="abs" style="left:67.5px;top:204.5px;width:3.0px;height:4.0px;background:#999"></div><div class="abs" style="left:72.5px;top:204.0px;width:13px;height:5px;background:repeating-linear-gradient(90deg,#aaa 0,#aaa 4px,rgba(255,255,255,0) 4px,rgba(255,255,255,0) 5.2px);opacity:.8"></div><div class="abs" style="left:6.5px;top:219.0px;width:50.5px;height:15.5px;background:#fff;box-shadow:0 0 0 .5px #eceef2"></div><div class="abs" style="left:12.5px;top:224.5px;width:3.0px;height:4.0px;background:#999"></div><div class="abs" style="left:17.5px;top:224.0px;width:13px;height:5px;background:repeating-linear-gradient(90deg,#aaa 0,#aaa 4px,rgba(255,255,255,0) 4px,rgba(255,255,255,0) 5.2px);opacity:.8"></div><div class="abs" style="left:61.5px;top:219.0px;width:50.5px;height:15.5px;background:#fff;box-shadow:0 0 0 .5px #eceef2"></div><div class="abs" style="left:67.5px;top:224.5px;width:3.0px;height:4.0px;background:#999"></div><div class="abs" style="left:72.5px;top:224.0px;width:13px;height:5px;background:repeating-linear-gradient(90deg,#aaa 0,#aaa 4px,rgba(255,255,255,0) 4px,rgba(255,255,255,0) 5.2px);opacity:.8"></div><div class="abs" style="left:119.0px;top:21.5px;width:292.5px;height:218.5px;background:#fdfdfd"></div><div class="abs" style="left:133.0px;top:30.0px;width:19px;height:5.5px;background:repeating-linear-gradient(90deg,#555 0,#555 4px,rgba(255,255,255,0) 4px,rgba(255,255,255,0) 5.2px);opacity:.7"></div><div class="abs" style="left:370.0px;top:30.0px;width:29px;height:5px;background:repeating-linear-gradient(90deg,#ccc 0,#ccc 4px,rgba(255,255,255,0) 4px,rgba(255,255,255,0) 5.2px)"></div><div class="abs" style="left:135.0px;top:48.0px;width:19px;height:5.5px;background:repeating-linear-gradient(90deg,#555 0,#555 4px,rgba(255,255,255,0) 4px,rgba(255,255,255,0) 5.2px);opacity:.7"></div><div class="abs" style="left:133.0px;top:59.0px;width:266.0px;height:1.5px;background:#e2e2e2"></div><div class="abs" style="left:133.0px;top:71.0px;width:3.0px;height:4.0px;background:#999"></div><div class="abs" style="left:138.0px;top:70.5px;width:10px;height:5px;background:repeating-linear-gradient(90deg,#888 0,#888 4px,rgba(255,255,255,0) 4px,rgba(255,255,255,0) 5.2px);opacity:.7"></div><div class="abs" style="left:132.0px;top:80.5px;width:129.0px;height:13.0px;background:#fff;border:1px solid #e4e4e4;border-radius:1px"></div><div class="abs" style="left:137.0px;top:85.0px;width:15px;height:4px;background:repeating-linear-gradient(90deg,#d9d9d9 0,#d9d9d9 4px,rgba(255,255,255,0) 4px,rgba(255,255,255,0) 5.2px)"></div><div class="abs" style="left:270.0px;top:71.0px;width:3.0px;height:4.0px;background:#999;border-radius:50%"></div><div class="abs" style="left:275.0px;top:70.5px;width:9px;height:5px;background:repeating-linear-gradient(90deg,#888 0,#888 4px,rgba(255,255,255,0) 4px,rgba(255,255,255,0) 5.2px);opacity:.7"></div><div class="abs" style="left:270.0px;top:80.5px;width:129.0px;height:13.0px;background:#fff;border:1px solid #e4e4e4"></div><div class="abs" style="left:276.0px;top:82.5px;width:12.0px;height:9.0px;background:#2b8ce6;border-radius:5px"></div><div class="abs" style="left:127.5px;top:99.0px;width:138.0px;height:33.0px;background:#dcebfb"></div><div class="abs" style="left:228.5px;top:97.0px;width:7.0px;height:7.0px;background:#fff;border:.6px solid #ddd;border-radius:50%"></div><div class="abs" style="left:240.5px;top:97.0px;width:7.0px;height:7.0px;background:#fff;border:.6px solid #ddd;border-radius:50%"></div><div class="abs" style="left:251.5px;top:97.0px;width:7.0px;height:7.0px;background:#fff;border:.6px solid #ddd;border-radius:50%"></div><div class="abs" style="left:133.0px;top:105.0px;width:3.0px;height:4.0px;background:#999"></div><div class="abs" style="left:138.0px;top:104.5px;width:10px;height:5px;background:repeating-linear-gradient(90deg,#888 0,#888 4px,rgba(255,255,255,0) 4px,rgba(255,255,255,0) 5.2px);opacity:.7"></div><div class="abs" style="left:132.0px;top:114.0px;width:129.0px;height:13.0px;background:#fff;border:1px solid #e4e4e4;border-radius:1px"></div><div class="abs" style="left:137.0px;top:118.5px;width:15px;height:4px;background:repeating-linear-gradient(90deg,#d9d9d9 0,#d9d9d9 4px,rgba(255,255,255,0) 4px,rgba(255,255,255,0) 5.2px)"></div><div class="abs" style="left:133.0px;top:139.0px;width:3.0px;height:4.0px;background:#999"></div><div class="abs" style="left:138.0px;top:138.5px;width:10px;height:5px;background:repeating-linear-gradient(90deg,#888 0,#888 4px,rgba(255,255,255,0) 4px,rgba(255,255,255,0) 5.2px);opacity:.7"></div><div class="abs" style="left:132.0px;top:147.5px;width:129.0px;height:13.5px;background:#fff;border:1px solid #e4e4e4;border-radius:1px"></div><div class="abs" style="left:137.0px;top:152.2px;width:15px;height:4px;background:repeating-linear-gradient(90deg,#d9d9d9 0,#d9d9d9 4px,rgba(255,255,255,0) 4px,rgba(255,255,255,0) 5.2px)"></div><div class="abs" style="left:270.0px;top:139.0px;width:3.0px;height:4.0px;background:#999;border-radius:50%"></div><div class="abs" style="left:275.0px;top:138.5px;width:17px;height:5px;background:repeating-linear-gradient(90deg,#888 0,#888 4px,rgba(255,255,255,0) 4px,rgba(255,255,255,0) 5.2px);opacity:.7"></div><div class="abs" style="left:270.0px;top:147.5px;width:129.0px;height:13.5px;background:#fff;border:1px solid #e4e4e4"></div><div class="abs" style="left:133.0px;top:172.0px;width:3.0px;height:4.0px;background:#999"></div><div class="abs" style="left:138.0px;top:171.5px;width:10px;height:5px;background:repeating-linear-gradient(90deg,#888 0,#888 4px,rgba(255,255,255,0) 4px,rgba(255,255,255,0) 5.2px);opacity:.7"></div><div class="abs" style="left:132.0px;top:182.0px;width:267.0px;height:13.0px;background:#fff;border:1px solid #e4e4e4;border-radius:1px"></div><div class="abs" style="left:137.0px;top:186.5px;width:15px;height:4px;background:repeating-linear-gradient(90deg,#d9d9d9 0,#d9d9d9 4px,rgba(255,255,255,0) 4px,rgba(255,255,255,0) 5.2px)"></div><div class="abs" style="left:133.0px;top:206.0px;width:3.0px;height:4.0px;background:#999"></div><div class="abs" style="left:138.0px;top:205.5px;width:10px;height:5px;background:repeating-linear-gradient(90deg,#888 0,#888 4px,rgba(255,255,255,0) 4px,rgba(255,255,255,0) 5.2px);opacity:.7"></div><div class="abs" style="left:132.0px;top:216.0px;width:267.0px;height:13.0px;background:#fff;border:1px solid #e4e4e4;border-radius:1px"></div><div class="abs" style="left:137.0px;top:220.5px;width:15px;height:4px;background:repeating-linear-gradient(90deg,#d9d9d9 0,#d9d9d9 4px,rgba(255,255,255,0) 4px,rgba(255,255,255,0) 5.2px)"></div><div class="abs" style="left:411.5px;top:21.5px;width:139.5px;height:218.5px;background:#fcfcfc;border-left:1px solid #f0f0f0"></div><div class="abs" style="left:550.0px;top:21.5px;width:2.0px;height:218.5px;background:#c8c8c8"></div><div class="abs" style="left:420.0px;top:29.0px;width:125.5px;height:30.0px;background:#f1f2f3;border-radius:2px"></div><div class="abs" style="left:428.0px;top:35.0px;width:4.0px;height:5.0px;background:#888"></div><div class="abs" style="left:435.0px;top:35.0px;width:11px;height:5px;background:repeating-linear-gradient(90deg,#555 0,#555 4px,rgba(255,255,255,0) 4px,rgba(255,255,255,0) 5.2px);opacity:.7"></div><div class="abs" style="left:428.0px;top:47.0px;width:54px;height:5px;background:repeating-linear-gradient(90deg,#ccc 0,#ccc 4px,rgba(255,255,255,0) 4px,rgba(255,255,255,0) 5.2px)"></div><div class="abs" style="left:420.0px;top:67.5px;width:17px;height:5px;background:repeating-linear-gradient(90deg,#666 0,#666 4px,rgba(255,255,255,0) 4px,rgba(255,255,255,0) 5.2px);opacity:.7"></div><div class="abs" style="left:420.0px;top:78.0px;width:125.5px;height:15.5px;background:#fff;border:1px solid #5aa6ee;border-radius:2px"></div><div class="abs" style="left:425.0px;top:83.0px;width:8.0px;height:6.0px;background:#777"></div><div class="abs" style="left:420.0px;top:103.0px;width:6.0px;height:6.0px;background:#2b8ce6;border-radius:50%"></div><div class="abs" style="left:430.0px;top:104.0px;width:6.0px;height:4.0px;background:#bbb"></div><div class="abs" style="left:482.0px;top:103.0px;width:6.0px;height:6.0px;border:.8px solid #ccc;border-radius:50%"></div><div class="abs" style="left:492.0px;top:104.0px;width:18px;height:4px;background:repeating-linear-gradient(90deg,#bbb 0,#bbb 4px,rgba(255,255,255,0) 4px,rgba(255,255,255,0) 5.2px)"></div><div class="abs" style="left:420.0px;top:120.5px;width:13px;height:5px;background:repeating-linear-gradient(90deg,#666 0,#666 4px,rgba(255,255,255,0) 4px,rgba(255,255,255,0) 5.2px);opacity:.7"></div><div class="abs" style="left:420.0px;top:131.0px;width:125.5px;height:14.5px;background:#fff;border:1px solid #e4e4e4"></div><div class="abs" style="left:420.0px;top:155.0px;width:9px;height:4.5px;background:repeating-linear-gradient(90deg,#666 0,#666 4px,rgba(255,255,255,0) 4px,rgba(255,255,255,0) 5.2px);opacity:.7"></div><div class="abs" style="left:420.0px;top:167.5px;width:5.0px;height:5.0px;border:.8px solid #ccc"></div><div class="abs" style="left:428.0px;top:168.0px;width:8.0px;height:4.0px;background:#aaa"></div><div class="abs" style="left:420.0px;top:182.0px;width:125.5px;height:1.0px;background:#eee"></div><div class="abs" style="left:420.0px;top:194.0px;width:17px;height:4.5px;background:repeating-linear-gradient(90deg,#666 0,#666 4px,rgba(255,255,255,0) 4px,rgba(255,255,255,0) 5.2px);opacity:.7"></div><div class="abs" style="left:420.0px;top:204.5px;width:5.0px;height:5.0px;border:.8px solid #ccc"></div><div class="abs" style="left:428.0px;top:205.0px;width:12px;height:4px;background:repeating-linear-gradient(90deg,#999 0,#999 4px,rgba(255,255,255,0) 4px,rgba(255,255,255,0) 5.2px)"></div><div class="abs" style="left:442.0px;top:205.0px;width:4.0px;height:4.0px;background:#bbb;border-radius:50%"></div><div class="abs" style="left:420.0px;top:214.0px;width:5.0px;height:5.0px;border:.8px solid #ccc"></div><div class="abs" style="left:428.0px;top:214.5px;width:12px;height:4px;background:repeating-linear-gradient(90deg,#999 0,#999 4px,rgba(255,255,255,0) 4px,rgba(255,255,255,0) 5.2px)"></div><div class="abs" style="left:442.0px;top:214.5px;width:4.0px;height:4.0px;background:#bbb;border-radius:50%"></div><div class="abs" style="left:420.0px;top:224.0px;width:5.0px;height:5.0px;border:.8px solid #ccc"></div><div class="abs" style="left:428.0px;top:224.5px;width:12px;height:4px;background:repeating-linear-gradient(90deg,#999 0,#999 4px,rgba(255,255,255,0) 4px,rgba(255,255,255,0) 5.2px)"></div><div class="abs" style="left:442.0px;top:224.5px;width:4.0px;height:4.0px;background:#bbb;border-radius:50%"></div></div>
  <div class="abs ct" style="left:32px;top:697px">Please note that the number of fields in a worksheet<br><span style="letter-spacing:0.5px">is limited to 200, and segmented fields and remark</span><br><span style="letter-spacing:0.5px">fields are not counted in this limit</span></div>
  <div class="abs" style="left:489.5px;top:814.5px;width:8.5px;height:8.5px;border:1.9px solid #1f2329;border-radius:50%"></div>
  <div class="abs" style="left:31.5px;top:850px;font-size:30px;line-height:45px;font-weight:700;color:#1a6fde;white-space:nowrap">Check out the article for more details</div>
  <div class="abs" style="left:31px;top:900px;width:540px;height:6px;border-radius:3px;background:#ef4b2b"></div>
  <svg class="abs" style="left:44px;top:947px" width="22" height="26" viewBox="0 0 22 26"><path d="M1 17.5 V3 A2 2 0 0 1 3 1 H15" fill="none" stroke="#707070" stroke-width="1.8"/><rect x="5.5" y="5.5" width="15.5" height="19.5" rx="2" fill="none" stroke="#707070" stroke-width="1.8"/></svg>
  <svg class="abs" style="left:101px;top:947px" width="32" height="26" viewBox="0 0 32 26"><path d="M1 6.5 H6.5 L18 1 V25 L6.5 19.5 H1 Z" fill="none" stroke="#707070" stroke-width="1.8"/><path d="M22 8 Q24.5 13 22 17.5" fill="none" stroke="#707070" stroke-width="1.8"/><path d="M26 4 Q31 13 26 22" fill="none" stroke="#707070" stroke-width="1.8"/></svg>
  <svg class="abs" style="left:164px;top:948px" width="24" height="24" viewBox="0 0 24 24"><path d="M21 7.5 A9.5 9.5 0 0 0 4.5 6" fill="none" stroke="#707070" stroke-width="1.8"/><path d="M1 1 V8 H8 Z" fill="#707070"/><path d="M3 16.5 A9.5 9.5 0 0 0 19.5 18" fill="none" stroke="#707070" stroke-width="1.8"/><path d="M23 23 V16 H16 Z" fill="#707070"/></svg>
  <div class="abs" style="left:32px;top:992px;width:732px;height:2px;background:#e8e8e8"></div>
  <div class="abs" style="left:33px;top:1023px;font-size:26px;line-height:30px;color:#a8a8a8;white-space:nowrap">You might want to ask</div>
  <div class="abs" style="left:33px;top:1069px;width:442px;height:56px;border:2px solid #dcdcdc;border-radius:28px;padding-left:19px;font-size:26px;line-height:52px;color:#3c3c3c;white-space:nowrap">What are the key features of HAP?</div>
  <svg class="abs" style="left:43px;top:1147px" width="34" height="34" viewBox="0 0 34 34"><path d="M15 2.5 C13 1.5 11 1.3 5 1.3 A3.7 3.7 0 0 0 1.3 5 V26 A3.7 3.7 0 0 0 5 29.7 H11 C13 29.7 15 30.5 17 32.5 C19 30.5 21 29.7 23 29.7 H29 A3.7 3.7 0 0 0 32.7 26 V5 A3.7 3.7 0 0 0 29 1.3 H22 A3.7 3.7 0 0 0 18.3 5 V23" fill="none" stroke="#707070" stroke-width="2.6" stroke-linecap="round"/><path d="M7 11.5 H11 M7.5 17.5 H10.5" stroke="#707070" stroke-width="2.6" stroke-linecap="round"/></svg>
  <div class="abs" style="left:88px;top:1150px;font-size:26px;line-height:30px;color:#444;white-space:nowrap">Help Docs.</div>
  <svg class="abs" style="left:719px;top:1147px" width="34" height="34" viewBox="0 0 34 34"><circle cx="17" cy="17" r="15.2" fill="none" stroke="#707070" stroke-width="2.8"/><path d="M16.5 8.5 V17 L24.5 21.5" fill="none" stroke="#707070" stroke-width="2.6"/></svg>
  <div class="abs" style="left:32px;top:1203px;width:731px;height:195px;border:2px solid #cfcfcf;border-radius:18px;background:#fff"></div>
  <div class="abs" style="left:57px;top:1227px;font-size:30px;line-height:34px;color:#c8c8c8;white-space:nowrap">Send Message</div>
  <div class="abs" style="left:50px;top:1286px;width:288px;height:48px;border-radius:8px;background:#f44a22;box-shadow:0 10px 24px rgba(0,0,0,0.08);padding-left:14px;font-size:27.5px;line-height:48px;font-weight:700;color:#fff;white-space:nowrap">Enter your question</div>
  <svg class="abs" style="left:612px;top:1329px" width="28" height="38" viewBox="0 0 28 38"><rect x="8" y="1.4" width="12" height="23" rx="6" fill="none" stroke="#707070" stroke-width="2.8"/><path d="M1.5 17 A12.5 12.5 0 0 0 26.5 17 M14 30 V35.5 M4.5 35.5 H23.5" fill="none" stroke="#707070" stroke-width="2.8"/></svg>
  <div class="abs" style="left:682px;top:1316px;width:64px;height:64px;border-radius:16px;background:#d6b9fb"></div>
  <svg class="abs" style="left:697px;top:1332px" width="36" height="32" viewBox="0 0 36 32"><path d="M0 0 L35 15.5 L0 31 V18 L24 15.5 L0 13 Z" fill="#fff"/></svg>
</div>

<!-- RIGHT SIDEBAR -->
<div id="rsb">
  <div class="abs" style="left:19px;top:10px;width:64px;height:64px;border-radius:50%;background:#9575cd;color:#fff;font-weight:700;font-size:32px;line-height:64px;text-align:center">R</div>
  <svg class="abs" style="left:30px;top:118px" width="42" height="40" viewBox="0 0 42 40"><path d="M21 2 C31.5 2 40 9 40 17.5 C40 26 31.5 33 21 33 C18.5 33 16 32.6 14 32 L7 38.5 L8 29 C4 26 2 22 2 17.5 C2 9 10.5 2 21 2 Z" fill="none" stroke="#757575" stroke-width="3"/><circle cx="13" cy="17.5" r="2.4" fill="#757575"/><circle cx="21" cy="17.5" r="2.4" fill="#757575"/><circle cx="29" cy="17.5" r="2.4" fill="#757575"/></svg>
  <div class="abs" style="left:2px;top:176px;font-size:23.5px;line-height:26px;color:#757575;white-space:nowrap">Messag</div>
  <svg class="abs" style="left:34px;top:236px" width="34" height="34" viewBox="0 0 34 34"><circle cx="13" cy="13" r="10.5" fill="none" stroke="#757575" stroke-width="3.4"/><path d="M21 21 L32 32" stroke="#757575" stroke-width="4"/></svg>
  <div class="abs" style="left:13px;top:291.5px;font-size:23.5px;line-height:26px;color:#757575;white-space:nowrap">Search</div>
  <div class="abs" style="left:36px;top:346px;width:30px;height:2px;background:#dedede"></div>
  <div class="abs" style="left:21px;top:382px;width:60px;height:60px;border-radius:50%;background:#2a8ef0"></div>
  <svg class="abs" style="left:26px;top:394px" width="50" height="36" viewBox="0 0 50 36"><g fill="#c8e3fc"><ellipse cx="11.5" cy="15" rx="4.6" ry="6.5"/><path d="M1.5 30.5 C1.5 25.5 5 23 11 22 L18 27 V30.5 Z"/><ellipse cx="38.5" cy="15" rx="4.6" ry="6.5"/><path d="M48.5 30.5 C48.5 25.5 45 23 39 22 L32 27 V30.5 Z"/></g><g fill="#fff" stroke="#2a8ef0" stroke-width="1.4"><ellipse cx="25" cy="11" rx="7.8" ry="8.5"/><path d="M7.5 33 V29.5 C7.5 24.5 14 21.5 25 21.5 C36 21.5 42.5 24.5 42.5 29.5 V33 Z"/></g></svg>
  <div class="abs" style="left:36px;top:464px;width:30px;height:30px;border-radius:50%;background:#9575cd;color:#fff;font-weight:700;font-size:13px;line-height:30px;text-align:center">Ro</div>
  <svg class="abs" style="left:22px;top:489px" width="31" height="31" viewBox="0 0 60 60"><defs><clipPath id="cav489"><circle cx="30" cy="30" r="30"/></clipPath></defs><g clip-path="url(#cav489)"><rect width="60" height="60" fill="#cfe8e6"/><path d="M0 60 L60 0 V8 L8 60 Z" fill="#dff0ee" opacity=".6"/><path d="M11 60 C14 52 20 49 25 47.5 L35 47.5 C41 49 47 52 49 60 Z" fill="#37417e"/><path d="M24 44 H35 V49 L29.5 57 L24 49 Z" fill="#fde6cc"/><ellipse cx="15.5" cy="29.5" rx="2.6" ry="3.2" fill="#fde6cc"/><ellipse cx="41.5" cy="29.5" rx="2.6" ry="3.2" fill="#fde6cc"/><path d="M17 18 H40 V36 C40 41 35 45 28.5 45 C22 45 17 41 17 36 Z" fill="#fde6cc"/><path d="M13 28 C12 15 16 6 22 2 C24 1 25 3 26 4 C32 4 40 6 44 14 C45 19 44 24 43.5 28 L40 26 V18 C33 20 24 20 17 18 V26 Z" fill="#4a3528"/><g fill="none" stroke="#2a2a2a" stroke-width="1.3"><rect x="17.5" y="26" width="9" height="7" rx="1.5"/><rect x="31.5" y="26" width="9" height="7" rx="1.5"/><path d="M26.5 28 H31.5"/></g><path d="M19 23.5 Q22 22 26 23.5 M32 23.5 Q36 22 39 23.5" stroke="#222" stroke-width="1.4" fill="none"/><ellipse cx="21.5" cy="34.5" rx="2.5" ry="1.3" fill="#f29a95"/><ellipse cx="36" cy="34.5" rx="2.5" ry="1.3" fill="#f29a95"/><path d="M26.5 40 Q29 41.5 31.5 40" stroke="#8a6a5a" stroke-width=".9" fill="none"/></g></svg>
  <div class="abs" style="left:48px;top:488px;width:33px;height:33px;border-radius:50%;background:#4caf50;border:2px solid #fff;color:#fff;font-weight:700;font-size:13px;line-height:29px;text-align:center">Fa</div>
  <div class="abs" style="left:21px;top:542px;width:60px;height:60px;border-radius:50%;background:#f6a344"></div>
  <svg class="abs" style="left:35px;top:556px" width="32" height="32" viewBox="0 0 32 32"><g fill="#fff"><rect x="0" y="0" width="14" height="14" rx="3"/><rect x="18" y="0" width="14" height="14" rx="3"/><rect x="0" y="18" width="14" height="14" rx="3"/><rect x="18" y="18" width="14" height="14" rx="3"/></g></svg>
  <div class="abs" style="left:21px;top:622px;width:60px;height:60px;border-radius:50%;background:#4e7ef2"></div>
  <svg class="abs" style="left:35px;top:636px" width="32" height="33" viewBox="0 0 32 33"><path d="M17.5 2.5 L7.5 18.5 L14 18.5 L12 30.5 L24.5 13.5 L17.5 13.5 L19.5 2.5 Z" fill="#fff" stroke="#fff" stroke-width="1.5" stroke-linejoin="round"/><path d="M5 4 L6.2 7.3 L9.5 8.5 L6.2 9.7 L5 13 L3.8 9.7 L0.5 8.5 L3.8 7.3 Z" fill="#fff"/><path d="M26 1 L26.9 3.6 L29.5 4.5 L26.9 5.4 L26 8 L25.1 5.4 L22.5 4.5 L25.1 3.6 Z" fill="#fff"/><path d="M28 19 L29 21.9 L32 23 L29 24.1 L28 27 L27 24.1 L24 23 L27 21.9 Z" fill="#fff"/></svg>
  <svg class="abs" style="left:21px;top:701px" width="60" height="60" viewBox="0 0 60 60"><defs><clipPath id="cav701"><circle cx="30" cy="30" r="30"/></clipPath></defs><g clip-path="url(#cav701)"><rect width="60" height="60" fill="#cfe8e6"/><path d="M0 60 L60 0 V8 L8 60 Z" fill="#dff0ee" opacity=".6"/><path d="M11 60 C14 52 20 49 25 47.5 L35 47.5 C41 49 47 52 49 60 Z" fill="#37417e"/><path d="M24 44 H35 V49 L29.5 57 L24 49 Z" fill="#fde6cc"/><ellipse cx="15.5" cy="29.5" rx="2.6" ry="3.2" fill="#fde6cc"/><ellipse cx="41.5" cy="29.5" rx="2.6" ry="3.2" fill="#fde6cc"/><path d="M17 18 H40 V36 C40 41 35 45 28.5 45 C22 45 17 41 17 36 Z" fill="#fde6cc"/><path d="M13 28 C12 15 16 6 22 2 C24 1 25 3 26 4 C32 4 40 6 44 14 C45 19 44 24 43.5 28 L40 26 V18 C33 20 24 20 17 18 V26 Z" fill="#4a3528"/><g fill="none" stroke="#2a2a2a" stroke-width="1.3"><rect x="17.5" y="26" width="9" height="7" rx="1.5"/><rect x="31.5" y="26" width="9" height="7" rx="1.5"/><path d="M26.5 28 H31.5"/></g><path d="M19 23.5 Q22 22 26 23.5 M32 23.5 Q36 22 39 23.5" stroke="#222" stroke-width="1.4" fill="none"/><ellipse cx="21.5" cy="34.5" rx="2.5" ry="1.3" fill="#f29a95"/><ellipse cx="36" cy="34.5" rx="2.5" ry="1.3" fill="#f29a95"/><path d="M26.5 40 Q29 41.5 31.5 40" stroke="#8a6a5a" stroke-width=".9" fill="none"/></g></svg>
  <div class="abs" style="left:21px;top:782px;width:60px;height:60px;border-radius:50%;background:#78909c"></div>
  <svg class="abs" style="left:35px;top:794px" width="32" height="36" viewBox="0 0 32 36"><path d="M16 1 C9 1 5 6 5 13 V22 L1 27 V28 H31 V27 L27 22 V13 C27 6 23 1 16 1 Z" fill="#fff"/><path d="M12 30.5 A4 4 0 0 0 20 30.5 Z" fill="#fff"/></svg>
  <div class="abs" style="left:21px;top:861px;width:60px;height:60px;border-radius:50%;background:#e95a72"></div>
  <svg class="abs" style="left:36px;top:873px" width="30" height="34" viewBox="0 0 30 34"><rect x="0" y="4" width="30" height="30" rx="3" fill="#fff"/><rect x="0" y="4" width="30" height="6" rx="2" fill="#fff"/><rect x="6" y="0" width="3" height="7" fill="#fff"/><rect x="21" y="0" width="3" height="7" fill="#fff"/><rect x="0" y="9.5" width="30" height="1.5" fill="#e95a72"/><text x="15" y="30" text-anchor="middle" font-family="Liberation Sans" font-size="17" fill="#e95a72">22</text></svg>
  <div class="abs" style="left:36px;top:953px;width:30px;height:2px;background:#dedede"></div>
  <div class="abs" style="left:5px;top:997px;width:8px;height:25px;border-radius:4px;background:#1677ff"></div>
  <div class="abs" style="left:25px;top:984px;width:52px;height:52px;border-radius:12px;background:#3f51b5"></div>
  <svg class="abs" style="left:34px;top:995px" width="34" height="30" viewBox="0 0 41 38"><rect x="6" y="1" width="29" height="3.5" rx="1.75" fill="#fff"/><rect x="2" y="8" width="37" height="3.5" rx="1.75" fill="#fff"/><rect x="1.75" y="15.5" width="37.5" height="20.5" rx="3" fill="none" stroke="#fff" stroke-width="3.5"/><circle cx="20.5" cy="25.75" r="5.5" fill="#fff"/><circle cx="8.5" cy="25.75" r="1.4" fill="#fff"/><circle cx="32.5" cy="25.75" r="1.4" fill="#fff"/></svg>
  <div class="abs" style="left:25px;top:1056px;width:52px;height:52px;border-radius:12px;background:#4caf50"></div>
  <svg class="abs" style="left:35px;top:1064px" width="34" height="36" viewBox="0 0 34 36"><path d="M17 8 L33 15 V27 L17 35 L1 27 V15 Z" fill="#fff"/><path d="M1 15 L17 23 L33 15" fill="none" stroke="#4caf50" stroke-width="1.5"/><g fill="#fff" stroke="#4caf50" stroke-width="1.2"><ellipse cx="17" cy="5" rx="4.5" ry="2.5"/><ellipse cx="9" cy="10" rx="4.5" ry="2.5"/><ellipse cx="25" cy="10" rx="4.5" ry="2.5"/><ellipse cx="17" cy="15" rx="4.5" ry="2.5"/></g></svg>
  <div class="abs" style="left:25px;top:1128px;width:52px;height:52px;border-radius:12px;background:#22b8d8"></div>
  <svg class="abs" style="left:35px;top:1139px" width="32" height="30" viewBox="0 0 32 30"><g fill="#fff"><rect x="1" y="18" width="5.5" height="12"/><rect x="9.5" y="13" width="5.5" height="17"/><rect x="18" y="16" width="5.5" height="14"/><rect x="26" y="10" width="5.5" height="20"/></g><path d="M2.5 11 L11 5 L20 9 L28.5 2" fill="none" stroke="#fff" stroke-width="2.5"/><circle cx="2.5" cy="11" r="2.6" fill="#fff"/><circle cx="11" cy="5" r="2.6" fill="#fff"/><circle cx="20" cy="9" r="2.6" fill="#fff"/><circle cx="28.5" cy="2.5" r="2.6" fill="#fff"/></svg>
  <svg class="abs" style="left:41px;top:1211px" width="20" height="13" viewBox="0 0 20 13"><path d="M1.5 1.5 L10 10.5 L18.5 1.5" fill="none" stroke="#666" stroke-width="3"/></svg>
  <div class="abs" style="left:36px;top:1279px;width:30px;height:2px;background:#dedede"></div>
  <div class="abs" style="left:8px;top:1340px;width:8px;height:24px;border-radius:4px;background:#7a12f7"></div>
  <svg class="abs" style="left:32px;top:1300px" width="44" height="96" viewBox="0 0 44 96"><path d="M13 12 L11.5 4 M15.5 12 L15.5 2.5 M18 12 L19.5 4.5" stroke="#f09a90" stroke-width="1.5" stroke-linecap="round"/><ellipse cx="22.7" cy="62" rx="17" ry="15" fill="#ee8479"/><path d="M30 52 L41 70 L36 73 Z" fill="#e9786c"/><path d="M13 31 C12 40 12 48 10 56 C12 62 20 62 21 56 C20 48 20 40 20 31 Z" fill="#f39287"/><path d="M18.5 77 V96 M27.5 77 V96" stroke="#ea7d72" stroke-width="2"/><ellipse cx="15.8" cy="22.5" rx="9.4" ry="9.5" fill="#f3a096"/><ellipse cx="9.3" cy="22" rx="2.6" ry="3.1" fill="#4d97dd"/><ellipse cx="22.3" cy="22" rx="2.6" ry="3.1" fill="#4d97dd"/><circle cx="9.8" cy="22" r="1.4" fill="#111"/><circle cx="21.8" cy="22" r="1.4" fill="#111"/><path d="M6.5 18.5 Q9 17.5 11 18.5 M20 18.5 Q22.5 17.5 25 18.5" stroke="#222" stroke-width="1" fill="none"/><path d="M11 23 C11 21 20 21 20 23 L19.5 31 L11.8 31 Z" fill="#f3994a"/><path d="M11.8 31 L19.5 31 L15.2 42.8 Z" fill="#2a1a17"/></svg>
</div>

<div id="shade"></div>
</body></html>
